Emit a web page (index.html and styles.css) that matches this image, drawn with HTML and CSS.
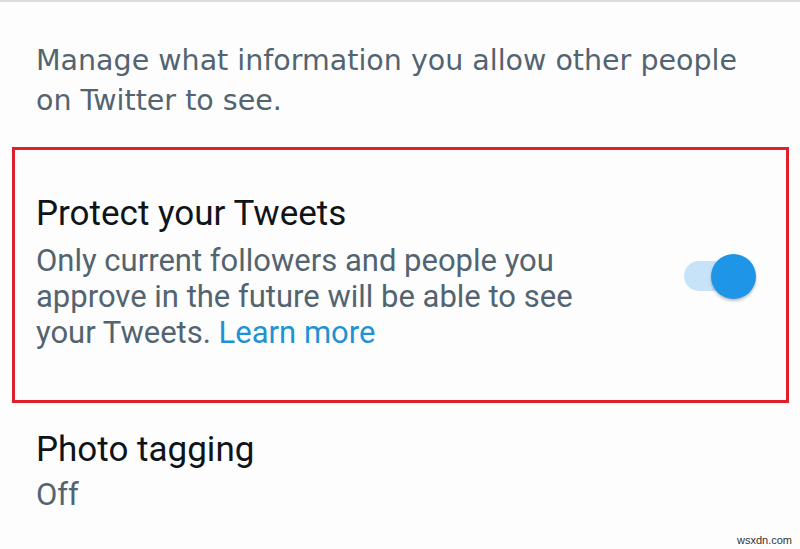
FILE: index.html
```html
<!DOCTYPE html>
<html lang="en">
<head>
    <meta charset="UTF-8">
    <meta name="viewport" content="width=device-width, initial-scale=1.0">
    <title>Audience and tagging</title>
    <link rel="stylesheet" href="styles.css">
</head>
<body>
    <div class="screen">
        <p class="intro">Manage what information you allow other people on Twitter to see.</p>

        <div class="highlight">
            <div class="setting">
                <div class="setting-text">
                    <h2>Protect your Tweets</h2>
                    <p>Only current followers and people you approve in the future will be able to see your Tweets. <a href="#">Learn more</a></p>
                </div>
                <div class="switch on">
                    <span class="track"></span>
                    <span class="thumb"></span>
                </div>
            </div>
        </div>

        <div class="setting plain">
            <div class="setting-text">
                <h2>Photo tagging</h2>
                <p>Off</p>
            </div>
        </div>

        <span class="watermark">wsxdn.com</span>
    </div>
</body>
</html>
```

FILE: styles.css
```css
body {
    margin: 0;
    padding: 0;
    background-color: #fdfdfd;
    font-family: Roboto, "Noto Sans", sans-serif;
}

.screen {
    position: relative;
    width: 800px;
    height: 549px;
    border-top: 2px solid #dcdcdc;
    box-sizing: border-box;
    overflow: hidden;
}

.intro {
    margin: 0;
    padding: 39px 40px 0 36px;
    font-family: "DejaVu Sans", Inter, sans-serif;
    font-size: 28.5px;
    line-height: 40px;
    color: #536471;
}

.highlight {
    margin: 26px 11px 0 12px;
    border: 3px solid #df1f2b;
}

.setting {
    display: flex;
    align-items: center;
    justify-content: space-between;
    padding: 44px 30px 49px 21px;
}

.setting h2 {
    margin: 0;
    font-size: 35px;
    font-weight: 400;
    line-height: 40px;
    color: #0f1419;
}

.setting p {
    margin: 9px 0 0 0;
    font-size: 31px;
    line-height: 36px;
    color: #536471;
}

.setting-text {
    max-width: 555px;
}

.setting a {
    color: #1d93d6;
    text-decoration: none;
}

.plain {
    padding: 27px 36px 0 36px;
}

.plain p {
    margin-top: 7px;
}

.switch {
    position: relative;
    width: 72px;
    height: 45px;
    margin-top: 8px;
}

.track {
    position: absolute;
    left: 0;
    top: 7px;
    width: 62px;
    height: 30px;
    border-radius: 15px;
    background-color: #c6e3f8;
}

.thumb {
    position: absolute;
    right: 0;
    top: 0;
    width: 45px;
    height: 45px;
    border-radius: 50%;
    background-color: #1f95e8;
    box-shadow: 0 2px 3px rgba(0, 0, 0, 0.25);
}

.watermark {
    position: absolute;
    right: 8px;
    bottom: 3px;
    font-family: "Liberation Sans", Arial, sans-serif;
    font-size: 11px;
    color: #333;
}
```
